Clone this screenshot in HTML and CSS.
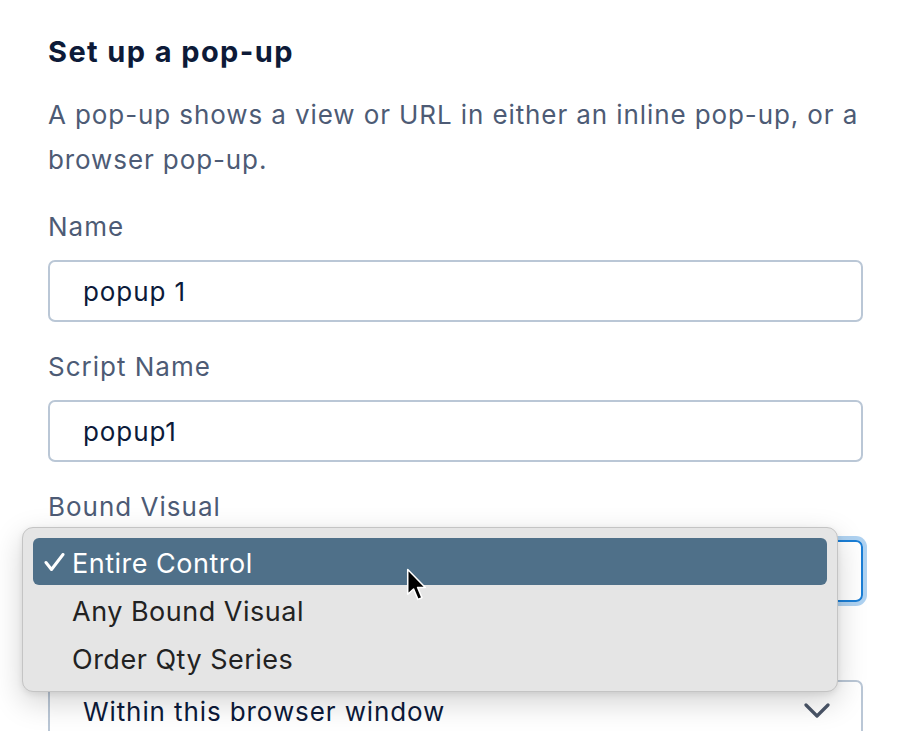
FILE: index.html
```html
<!DOCTYPE html>
<html lang="en">
<head>
<meta charset="utf-8">
<title>Set up a pop-up</title>
<link rel="stylesheet" href="styles.css">
</head>
<body>
<main class="panel">
  <h1 class="title">Set up a pop-up</h1>
  <p class="desc">A pop-up shows a view or URL in either an inline pop-up, or a browser pop-up.</p>

  <div class="field">
    <div class="label">Name</div>
    <div class="box">popup 1</div>
  </div>

  <div class="field">
    <div class="label">Script Name</div>
    <div class="box">popup1</div>
  </div>

  <div class="field">
    <div class="label">Bound Visual</div>
    <div class="box select focused">Entire Control</div>
  </div>

  <div class="field">
    <div class="label">Pop-up Type</div>
    <div class="box select">
      <span>Within this browser window</span>
      <svg class="chev" width="26" height="16" viewBox="0 0 26 16"><polyline points="2,2 13,13 24,2" fill="none" stroke="#4a5568" stroke-width="3.2" stroke-linecap="round" stroke-linejoin="round"/></svg>
    </div>
  </div>
</main>

<div class="menu">
  <div class="opt active">
    <svg class="check" width="22" height="20" viewBox="0 0 22 20"><path d="M2 9.5 L7.5 16.5 L19 1.5" fill="none" stroke="#fff" stroke-width="3" stroke-linecap="round" stroke-linejoin="round"/></svg>
    <span>Entire Control</span>
  </div>
  <div class="opt"><span>Any Bound Visual</span></div>
  <div class="opt"><span>Order Qty Series</span></div>
</div>

<svg class="cursor" width="22" height="34" viewBox="0 0 14 22"><path d="M1 1 L1 17 L4.8 13.6 L7.6 20.3 L10.2 19.2 L7.4 12.6 L12.4 12.6 Z" fill="#000" stroke="#fff" stroke-width="1" stroke-linejoin="round"/></svg>
</body>
</html>
```

FILE: styles.css
```css
html, body {
  margin: 0;
  padding: 0;
  background: #ffffff;
  overflow: hidden;
  height: 731px;
}

body {
  font-family: Inter, "Noto Sans", "Liberation Sans", sans-serif;
  position: relative;
}

.panel {
  width: 815px;
  padding: 34px 0 0 48px;
  display: flex;
  flex-direction: column;
}

.title {
  margin: 0;
  font-size: 29px;
  line-height: 35px;
  font-weight: 700;
  letter-spacing: 1.4px;
  color: #0d1a38;
}

.desc {
  margin: 23px 0 0 0;
  font-size: 26px;
  line-height: 45px;
  letter-spacing: 0.9px;
  color: #4d5b75;
}

.field {
  display: flex;
  flex-direction: column;
  margin-top: 27px;
}

.desc + .field {
  margin-top: 27px;
}

.label {
  font-size: 26px;
  line-height: 34px;
  padding-top: 1px;
  letter-spacing: 1px;
  color: #4d5b75;
  margin-bottom: 16px;
}

.box {
  box-sizing: border-box;
  height: 62px;
  border: 2px solid #bac7d6;
  border-radius: 7px;
  padding: 0 0 0 33px;
  display: flex;
  align-items: center;
  font-size: 26px;
  letter-spacing: 0.9px;
  color: #0c1a3a;
}

.select {
  justify-content: space-between;
  padding-right: 31px;
}

.focused {
  border-color: #1a7ed6;
  box-shadow: 0 0 0 4px rgba(26, 126, 214, 0.35);
}

.menu {
  position: absolute;
  left: 22px;
  top: 527px;
  width: 816px;
  box-sizing: border-box;
  padding: 10px;
  background: #e5e5e5;
  border: 1px solid #c4c4c4;
  border-radius: 11px;
  box-shadow: 0 10px 30px rgba(0, 0, 0, 0.18), 0 2px 6px rgba(0, 0, 0, 0.08);
  display: flex;
  flex-direction: column;
  gap: 1px;
}

.opt {
  box-sizing: border-box;
  height: 47px;
  border-radius: 6px;
  display: flex;
  align-items: center;
  padding: 4px 0 0 39px;
  position: relative;
  font-size: 27px;
  letter-spacing: 0.5px;
  color: #222222;
}

.opt.active {
  background: #4f7089;
  color: #ffffff;
}

.check {
  position: absolute;
  left: 11px;
  top: 15px;
}

.cursor {
  position: absolute;
  left: 406px;
  top: 568px;
}
```
